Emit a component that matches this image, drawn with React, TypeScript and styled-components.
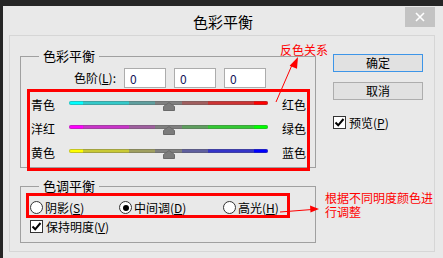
import styled, {createGlobalStyle, css} from 'styled-components';

const GlobalStyle = createGlobalStyle`
	html, body {
		margin: 0;
		padding: 0;
		background: #262626;
	}

	body {
		font-family: "Noto Sans CJK SC", "Noto Sans", "Liberation Sans", sans-serif;
		font-size: 12px;
		color: #000;
	}
`;

const Screen = styled.div`
	position: relative;
	width: 443px;
	height: 258px;
	box-sizing: border-box;
	padding: 6px 0 0 3px;
	background: #262626;
	overflow: hidden;
`;

const Window = styled.div`
	height: 252px;
	display: flex;
	flex-direction: column;
	background: #e9e9e9;
`;

const TitleBar = styled.div`
	position: relative;
	flex: none;
	height: 29px;
	box-sizing: border-box;
	padding-top: 3px;
	display: flex;
	align-items: center;
	justify-content: center;
	font-size: 15px;
	line-height: 18px;
`;

const CloseButton = styled.div`
	position: absolute;
	top: 1px;
	right: 8px;
	width: 30px;
	height: 20px;
	display: flex;
	align-items: center;
	justify-content: center;
	background: #c3c3c3;
`;

const Panel = styled.div`
	flex: 1;
	margin: 0 8px 6px 6px;
	padding: 12px 0 0 10px;
	border: 1px solid #d6d6d6;
	display: flex;
	gap: 17px;
`;

const LeftColumn = styled.div`
	display: flex;
	flex-direction: column;
	width: 296px;
`;

const Group = styled.fieldset<{readonly $pad: string; readonly $gap?: number}>(props => css`
	margin: ${props.$gap ?? 0}px 0 0 0;
	padding: ${props.$pad};
	width: 296px;
	min-width: 0;
	box-sizing: border-box;
	border: 1px solid #a0a0a0;
`);

const Legend = styled.legend`
	margin-left: 12px;
	padding: 0 4px;
	font-size: 13px;
	line-height: 16px;
`;

const Mnemonic = styled.u`
	text-decoration: underline;
	text-underline-offset: 1px;
`;

const LevelRow = styled.div`
	display: flex;
	align-items: center;
	gap: 8px;
	height: 20px;
`;

const LevelLabel = styled.span`
	width: 89px;
	text-align: right;
	line-height: 14px;
`;

const LevelInput = styled.input`
	width: 42px;
	height: 20px;
	box-sizing: border-box;
	margin: 0;
	padding: 0 5px;
	border: 1px solid #acacac;
	background: #fff;
	font-family: inherit;
	font-size: 12px;
	color: #14145a;
	outline: none;
`;

const HighlightBox = styled.div`
	margin-top: 1px;
	margin-bottom: -4px;
	width: 283px;
	height: 82px;
	box-sizing: border-box;
	border: 3px solid #ff0000;
	padding: 1px 0 0 1px;
	display: flex;
	flex-direction: column;
`;

const SliderRow = styled.div`
	display: flex;
	align-items: center;
	height: 24px;
`;

const SideLabel = styled.span<{readonly $right?: boolean}>(props => css`
	flex: none;
	line-height: 14px;
	${props.$right ? 'margin-left: 14px;' : 'width: 38px;'}
`);

const Slider = styled.div`
	position: relative;
	flex: none;
	width: 199px;
	height: 10px;
`;

const Track = styled.div<{readonly $stops: string[]}>(props => {
	const [b1, m1, u1, u2, m2, b2] = props.$stops;
	return css`
		margin-top: 1px;
		height: 4px;
		border-radius: 2px;
		box-shadow: inset 0 0 0 1px rgba(90, 90, 90, 0.35);
		background: linear-gradient(to right,
			${b1} 0 14px, ${m1} 14px 60px, ${u1} 60px 86px,
			#808080 86px 113px,
			${u2} 113px 139px, ${m2} 139px 185px, ${b2} 185px 199px);
	`;
});

const Thumb = styled.svg`
	position: absolute;
	top: 2px;
	left: calc(50% - 6px);
	width: 12px;
	height: 9px;
`;

const RightColumn = styled.div`
	display: flex;
	flex-direction: column;
	width: 90px;
	padding-top: 6px;
`;

const DialogButton = styled.div<{readonly $primary?: boolean}>(props => css`
	height: 18px;
	box-sizing: border-box;
	margin-bottom: 10px;
	display: flex;
	align-items: center;
	justify-content: center;
	border: 1px solid ${props.$primary ? '#3d95e8' : '#adadad'};
	background: #e1e1e1;
	line-height: 14px;
`);

const CheckRow = styled.div<{readonly $offset: number; readonly $indent?: number}>(props => css`
	display: flex;
	align-items: center;
	gap: 3px;
	height: 13px;
	margin-top: ${props.$offset}px;
	margin-left: ${props.$indent ?? 0}px;
	line-height: 14px;
`);

const Box = styled.div`
	flex: none;
	width: 13px;
	height: 13px;
	box-sizing: border-box;
	border: 1px solid #333;
	background: #fff;
	display: flex;
	align-items: center;
	justify-content: center;
`;

const ToneBox = styled.div`
	margin: -1px 0 0 -1px;
	width: 264px;
	height: 25px;
	box-sizing: border-box;
	border: 3px solid #ff0000;
	padding: 4px 0 0 1px;
	display: flex;
	align-items: center;
`;

const RadioItem = styled.div<{readonly $width?: number}>(props => css`
	display: flex;
	align-items: center;
	gap: 2px;
	line-height: 14px;
	${props.$width ? `width: ${props.$width}px; flex: none;` : ''}
`);

const RadioCircle = styled.div<{readonly $checked?: boolean}>(props => css`
	flex: none;
	width: 13px;
	height: 13px;
	box-sizing: border-box;
	border-radius: 50%;
	border: 1px solid #333;
	background: #fff;
	display: flex;
	align-items: center;
	justify-content: center;

	&::after {
		content: '';
		width: 6px;
		height: 6px;
		border-radius: 50%;
		background: ${props.$checked ? '#000' : 'transparent'};
	}
`);

const Note = styled.div<{readonly $left: number; readonly $top: number; readonly $width?: number}>(props => css`
	position: absolute;
	left: ${props.$left}px;
	top: ${props.$top}px;
	${props.$width ? `width: ${props.$width}px;` : ''}
	color: #ff0000;
	font-size: 12px;
	line-height: 14px;
	white-space: ${props.$width ? 'normal' : 'nowrap'};
`);

const Arrows = styled.svg`
	position: absolute;
	left: 0;
	top: 0;
	width: 443px;
	height: 258px;
	pointer-events: none;
`;

const Check = () => (
	<Box>
		<svg width='11' height='11' viewBox='0 0 11 11'>
			<path d='M1.5 5.5 L4.2 8.3 L9.5 2' fill='none' stroke='#000' strokeWidth='2'/>
		</svg>
	</Box>
);

const sliders = [
	{left: '青色', right: '红色', stops: ['#00ffff', '#34c9c9', '#5f9f9f', '#a05f5f', '#cd3434', '#ff0000']},
	{left: '洋红', right: '绿色', stops: ['#ff00ff', '#c934c9', '#9f5f9f', '#5f9f5f', '#34c934', '#00ff00']},
	{left: '黄色', right: '蓝色', stops: ['#ffff00', '#c9c934', '#9f9f5f', '#5f5f9f', '#3434c9', '#0000ff']},
];

export default function App() {
	return (
		<Screen>
			<GlobalStyle/>
			<Window>
				<TitleBar>
					色彩平衡
					<CloseButton>
						<svg width='10' height='10' viewBox='0 0 10 10'>
							<path d='M1 1 L9 9 M9 1 L1 9' stroke='#fff' strokeWidth='1.6'/>
						</svg>
					</CloseButton>
				</TitleBar>
				<Panel>
					<LeftColumn>
						<Group $pad='4px 5px 0 6px'>
							<Legend>色彩平衡</Legend>
							<LevelRow>
								<LevelLabel>色阶(<Mnemonic>L</Mnemonic>):</LevelLabel>
								<LevelInput readOnly value='0'/>
								<LevelInput readOnly value='0'/>
								<LevelInput readOnly value='0'/>
							</LevelRow>
							<HighlightBox>
								{sliders.map(s => (
									<SliderRow key={s.left}>
										<SideLabel>{s.left}</SideLabel>
										<Slider>
											<Track $stops={s.stops}/>
											<Thumb viewBox='0 0 12 9'>
												<path d='M6 0.5 L11.5 4.5 L11.5 8.5 L0.5 8.5 L0.5 4.5 Z' fill='#7c7c7c' stroke='#6a6a6a'/>
											</Thumb>
										</Slider>
										<SideLabel $right>{s.right}</SideLabel>
									</SliderRow>
								))}
							</HighlightBox>
						</Group>
						<Group $pad='0 5px 9px 6px' $gap={10}>
							<Legend>色调平衡</Legend>
							<ToneBox>
								<RadioItem $width={89}>
									<RadioCircle/>
									<span>阴影(<Mnemonic>S</Mnemonic>)</span>
								</RadioItem>
								<RadioItem $width={104}>
									<RadioCircle $checked/>
									<span>中间调(<Mnemonic>D</Mnemonic>)</span>
								</RadioItem>
								<RadioItem>
									<RadioCircle/>
									<span>高光(<Mnemonic>H</Mnemonic>)</span>
								</RadioItem>
							</ToneBox>
							<CheckRow $offset={2} $indent={3}>
								<Check/>
								<span>保持明度(<Mnemonic>V</Mnemonic>)</span>
							</CheckRow>
						</Group>
					</LeftColumn>
					<RightColumn>
						<DialogButton $primary>确定</DialogButton>
						<DialogButton>取消</DialogButton>
						<CheckRow $offset={6}>
							<Check/>
							<span>预览(<Mnemonic>P</Mnemonic>)</span>
						</CheckRow>
					</RightColumn>
				</Panel>
			</Window>

			<Note $left={280} $top={43}>反色关系</Note>
			<Note $left={325} $top={191} $width={110}>根据不同明度颜色进行调整</Note>

			<Arrows viewBox='0 0 443 258'>
				<line x1='292' y1='65' x2='276' y2='102' stroke='#ff0000' strokeWidth='1'/>
				<polygon points='298,57 289.6,65.8 297,68.8' fill='#ff0000'/>
				<line x1='280' y1='212' x2='312' y2='209.5' stroke='#ff0000' strokeWidth='1'/>
				<polygon points='319,209 310,205.5 310.5,212.5' fill='#ff0000'/>
			</Arrows>
		</Screen>
	);
}
